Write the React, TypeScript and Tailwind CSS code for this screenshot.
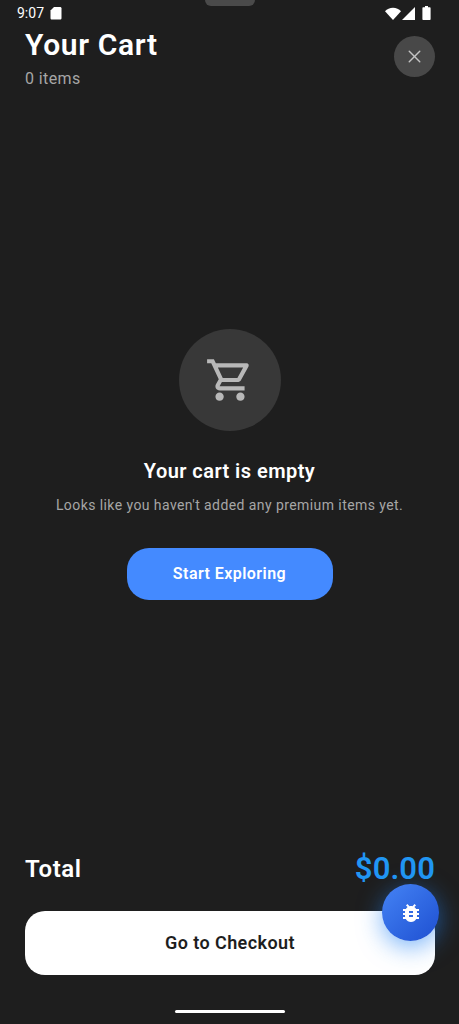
import { X } from 'lucide-react';

function SdIcon() {
  return (
    <svg width="12" height="14" viewBox="0 0 12 14" className="fill-white">
      <path d="M4 1h6.2c.7 0 1.3.6 1.3 1.3v9.9c0 .7-.6 1.3-1.3 1.3H1.8c-.7 0-1.3-.6-1.3-1.3V4.5L4 1z" />
    </svg>
  );
}

function StatusIcons() {
  return (
    <div className="flex items-center gap-[1px]">
      <svg width="16" height="13" viewBox="0 0 16 13" className="fill-white">
        <path d="M8 13 0 4.2C2 2 4.8 .8 8 .8s6 1.2 8 3.4L8 13z" />
      </svg>
      <svg width="13" height="13" viewBox="0 0 13 13" className="fill-white">
        <path d="M13 0v13H0L13 0z" />
      </svg>
      <svg width="9" height="14" viewBox="0 0 9 14" className="ml-[6px] fill-white">
        <path d="M3 0h3v1.3h1.6c.6 0 1 .4 1 1v10.7c0 .6-.4 1-1 1H1.4c-.6 0-1-.4-1-1V2.3c0-.6.4-1 1-1H3V0z" />
      </svg>
    </div>
  );
}

function CartIcon() {
  return (
    <svg width="50" height="50" viewBox="0 0 24 24" className="fill-[#b8b8b8]">
      <path d="M15.55 13c.75 0 1.41-.41 1.75-1.03l3.58-6.49c.37-.66-.11-1.48-.87-1.48H5.21l-.94-2H1v2h2l3.6 7.59-1.35 2.44C4.52 15.37 5.48 17 7 17h12v-2H7l1.1-2h7.45zM6.16 6h12.15l-2.76 5H8.53L6.16 6zM7 18c-1.1 0-1.99.9-1.99 2S5.9 22 7 22s2-.9 2-2-.9-2-2-2zm10 0c-1.1 0-1.99.9-1.99 2s.89 2 1.99 2 2-.9 2-2-.9-2-2-2z" />
    </svg>
  );
}

function BugIcon() {
  return (
    <svg width="24" height="24" viewBox="0 0 24 24" className="fill-white">
      <path d="M20 8h-2.81c-.45-.78-1.07-1.45-1.82-1.96L17 4.41 15.59 3l-2.17 2.17C12.96 5.06 12.49 5 12 5c-.49 0-.96.06-1.41.17L8.41 3 7 4.41l1.62 1.63C7.88 6.55 7.26 7.22 6.81 8H4v2h2.09c-.05.33-.09.66-.09 1v1H4v2h2v1c0 .34.04.67.09 1H4v2h2.81c1.04 1.79 2.97 3 5.19 3s4.15-1.21 5.19-3H20v-2h-2.09c.05-.33.09-.66.09-1v-1h2v-2h-2v-1c0-.34-.04-.67-.09-1H20V8zm-6 8h-4v-2h4v2zm0-4h-4v-2h4v2z" />
    </svg>
  );
}

export default function App() {
  return (
    <div className="relative flex h-[1024px] w-[459px] flex-col overflow-hidden bg-[#1e1e1e] font-['Roboto',sans-serif] text-white">
      {/* status bar */}
      <div className="flex h-[26px] shrink-0 items-center justify-between pl-[17px] pr-[28px]">
        <div className="flex items-center gap-[6px]">
          <span className="text-[14px] leading-none">9:07</span>
          <SdIcon />
        </div>
        <StatusIcons />
      </div>
      <div className="absolute left-[205px] top-0 h-[6px] w-[50px] rounded-b-full bg-[#4a4a4a]" />

      {/* header */}
      <div className="flex items-start justify-between pl-[25px] pr-[24px]">
        <div>
          <h1 className="text-[30px] font-semibold leading-[38px] tracking-[0.65px]">Your Cart</h1>
          <p className="mt-[1px] text-[16px] leading-[28px] tracking-[0.4px] text-[#a6a6a6]">0 items</p>
        </div>
        <button className="mt-[10px] flex h-[41px] w-[41px] items-center justify-center rounded-full bg-[#484848]">
          <X size={21} strokeWidth={1.6} className="text-[#c4c4c4]" />
        </button>
      </div>

      {/* empty state */}
      <div className="flex flex-1 flex-col items-center justify-center pb-[14px]">
        <div className="flex h-[102px] w-[102px] items-center justify-center rounded-full bg-[#383838]">
          <CartIcon />
        </div>
        <h2 className="mt-[26px] text-[20px] font-semibold leading-[28px] tracking-[0.45px]">Your cart is empty</h2>
        <p className="mt-[10px] text-[14px] leading-[20px] tracking-[0.42px] text-[#a6a6a6]">
          Looks like you haven't added any premium items yet.
        </p>
        <button className="mt-[33px] flex h-[52px] w-[206px] items-center justify-center rounded-[22px] bg-[#448aff] text-[16px] font-semibold tracking-[0.45px]">
          Start Exploring
        </button>
      </div>

      {/* footer */}
      <div className="px-[24px] pl-[25px]">
        <div className="flex items-center justify-between">
          <span className="text-[24px] font-semibold leading-[38px] tracking-[0.6px]">Total</span>
          <span className="text-[31px] font-semibold leading-[38px] tracking-[0.1px] text-[#2196f3]">$0.00</span>
        </div>
        <button className="mt-[23px] flex h-[64px] w-full items-center justify-center rounded-[20px] bg-white pb-[2px] text-[18px] font-semibold tracking-[0.43px] text-[#1e1e1e]">
          Go to Checkout
        </button>
      </div>
      <div className="flex h-[49px] items-center justify-center pt-[23px]">
        <div className="h-[3px] w-[110px] rounded-full bg-white" />
      </div>

      {/* debug fab */}
      <button className="absolute left-[382px] top-[884px] flex h-[57px] w-[57px] items-center justify-center rounded-full bg-gradient-to-br from-[#4583f5] to-[#1f4fd1] shadow-[0_6px_24px_rgba(33,130,243,0.6)]">
        <BugIcon />
      </button>
    </div>
  );
}
